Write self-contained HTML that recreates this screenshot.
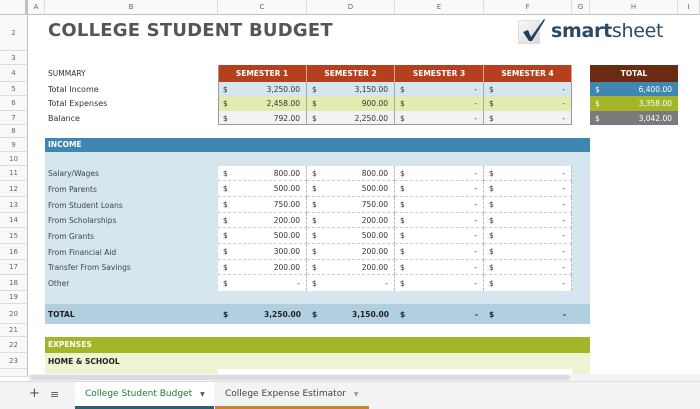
<!DOCTYPE html>
<html><head><meta charset="utf-8"><style>
*{margin:0;padding:0;box-sizing:border-box}
body{width:700px;height:409px;overflow:hidden;background:#fff;font-family:"DejaVu Sans","Liberation Sans",sans-serif;position:relative;color:#333}
.a{position:absolute}
.rh{position:absolute;left:0;width:28px;background:#f8f9fa;border-bottom:1px solid #dadce0;border-right:1px solid #c0c0c0;font-size:7px;color:#666;text-align:center;display:flex;align-items:center;justify-content:center}
.ch{position:absolute;top:0;height:15px;background:#f8f9fa;border-right:1px solid #dadce0;border-bottom:1px solid #c0c0c0;font-size:7px;color:#666;display:flex;align-items:center;justify-content:center}
.lbl{position:absolute;left:48px;font-size:8px;color:#333;display:flex;align-items:center}
.cell{position:absolute;font-size:7.5px;color:#333;display:flex;align-items:center;justify-content:space-between;padding:0 6px 0 5px}
.w{background:#fff;border-right:1px dashed #bbb;border-bottom:1px dashed #ccc}
.sh{position:absolute;top:65px;height:17px;background:#b5401e;color:#fff;font-weight:bold;font-size:7.5px;display:flex;align-items:center;justify-content:center;border-right:1px solid #e8a08a}
</style></head><body>
<!-- column headers -->
<div class="ch" style="left:0;width:28px;background:#f8f9fa;border-right:3px solid #c0c0c0"></div>
<div class="ch" style="left:28px;width:17px">A</div>
<div class="ch" style="left:45px;width:173px">B</div>
<div class="ch" style="left:218px;width:89px">C</div>
<div class="ch" style="left:307px;width:88px">D</div>
<div class="ch" style="left:395px;width:89px">E</div>
<div class="ch" style="left:484px;width:88px">F</div>
<div class="ch" style="left:572px;width:18px">G</div>
<div class="ch" style="left:590px;width:88px">H</div>
<div class="ch" style="left:678px;width:22px">I</div>
<!-- row headers -->
<div class="rh" style="top:15px;height:36px">2</div>
<div class="rh" style="top:51px;height:14px">3</div>
<div class="rh" style="top:65px;height:17px">4</div>
<div class="rh" style="top:82px;height:14px">5</div>
<div class="rh" style="top:96px;height:15px">6</div>
<div class="rh" style="top:111px;height:14px">7</div>
<div class="rh" style="top:125px;height:13px">8</div>
<div class="rh" style="top:138px;height:14px">9</div>
<div class="rh" style="top:152px;height:14px">10</div>
<div class="rh" style="top:166px;height:15px">11</div>
<div class="rh" style="top:181px;height:16px">12</div>
<div class="rh" style="top:197px;height:16px">13</div>
<div class="rh" style="top:213px;height:15px">14</div>
<div class="rh" style="top:228px;height:16px">15</div>
<div class="rh" style="top:244px;height:16px">16</div>
<div class="rh" style="top:260px;height:15px">17</div>
<div class="rh" style="top:275px;height:16px">18</div>
<div class="rh" style="top:291px;height:13px">19</div>
<div class="rh" style="top:304px;height:20px">20</div>
<div class="rh" style="top:324px;height:13px">21</div>
<div class="rh" style="top:337px;height:16px">22</div>
<div class="rh" style="top:353px;height:16px">23</div>
<div class="rh" style="top:369px;height:8px"></div>

<!-- title -->
<div class="a" style="left:48px;top:20px;font-size:18px;font-weight:bold;color:#555;letter-spacing:0.2px">COLLEGE STUDENT BUDGET</div>
<!-- logo -->
<div class="a" style="left:518px;top:20px;width:22px;height:24px;background:linear-gradient(135deg,#fafafa,#d8d8d8);border:1px solid #ddd"></div>
<svg class="a" style="left:520px;top:17px" width="28" height="28" viewBox="0 0 28 28"><path d="M3 15 L8 13 L11 20 L24 2 L25 3 L12 24 L9 24 Z" fill="#1f3f5c"/></svg>
<div class="a" style="left:551px;top:20px;font-size:19px;color:#2b4a66;font-family:'DejaVu Sans',sans-serif;letter-spacing:-0.3px"><b>smart</b>sheet</div>

<!-- summary -->
<div class="lbl" style="top:65px;height:17px;font-size:7.5px">SUMMARY</div>
<div class="lbl" style="top:82px;height:14px">Total Income</div>
<div class="lbl" style="top:96px;height:15px">Total Expenses</div>
<div class="lbl" style="top:111px;height:14px">Balance</div>
<div class="sh" style="left:218px;width:89px">SEMESTER 1</div>
<div class="sh" style="left:307px;width:88px">SEMESTER 2</div>
<div class="sh" style="left:395px;width:89px">SEMESTER 3</div>
<div class="sh" style="left:484px;width:88px">SEMESTER 4</div>
<div class="a" style="left:218px;top:82px;width:354px;height:14px;background:#d6e6ef"></div>
<div class="a" style="left:218px;top:96px;width:354px;height:15px;background:#e3ecb0"></div>
<div class="a" style="left:218px;top:111px;width:354px;height:14px;background:#f2f2f2;border-bottom:1px solid #999"></div>
<div class="cell" style="left:218px;top:82px;width:89px;height:14px;border-right:1px solid #aaa"><span>$</span><span>3,250.00</span></div>
<div class="cell" style="left:307px;top:82px;width:88px;height:14px;border-right:1px solid #aaa"><span>$</span><span>3,150.00</span></div>
<div class="cell" style="left:395px;top:82px;width:89px;height:14px;border-right:1px solid #aaa"><span>$</span><span>-</span></div>
<div class="cell" style="left:484px;top:82px;width:88px;height:14px;border-right:1px solid #999"><span>$</span><span>-</span></div>
<div class="cell" style="left:218px;top:96px;width:89px;height:15px;border-right:1px solid #aaa"><span>$</span><span>2,458.00</span></div>
<div class="cell" style="left:307px;top:96px;width:88px;height:15px;border-right:1px solid #aaa"><span>$</span><span>900.00</span></div>
<div class="cell" style="left:395px;top:96px;width:89px;height:15px;border-right:1px solid #aaa"><span>$</span><span>-</span></div>
<div class="cell" style="left:484px;top:96px;width:88px;height:15px;border-right:1px solid #999"><span>$</span><span>-</span></div>
<div class="cell" style="left:218px;top:111px;width:89px;height:14px;border-right:1px solid #aaa"><span>$</span><span>792.00</span></div>
<div class="cell" style="left:307px;top:111px;width:88px;height:14px;border-right:1px solid #aaa"><span>$</span><span>2,250.00</span></div>
<div class="cell" style="left:395px;top:111px;width:89px;height:14px;border-right:1px solid #aaa"><span>$</span><span>-</span></div>
<div class="cell" style="left:484px;top:111px;width:88px;height:14px;border-right:1px solid #999"><span>$</span><span>-</span></div>
<div class="a" style="left:218px;top:65px;width:1px;height:60px;background:#999"></div>
<!-- total -->
<div class="sh" style="left:590px;width:88px;background:#6b2a12;border:none">TOTAL</div>
<div class="cell" style="left:590px;top:82px;width:88px;height:14px;background:#3f86b0;color:#fff"><span>$</span><span>6,400.00</span></div>
<div class="cell" style="left:590px;top:96px;width:88px;height:15px;background:#a4b52a;color:#fff"><span>$</span><span>3,358.00</span></div>
<div class="cell" style="left:590px;top:111px;width:88px;height:14px;background:#7a7a7a;color:#fff"><span>$</span><span>3,042.00</span></div>

<!-- income -->
<div class="a" style="left:45px;top:138px;width:545px;height:14px;background:#3f86b0;color:#fff;font-weight:bold;font-size:7.5px;padding-left:3px;line-height:14px">INCOME</div>
<div class="a" style="left:45px;top:152px;width:545px;height:152px;background:#d6e6ef"></div>
<div class="a" style="left:218px;top:166px;width:354px;height:125px;background:#fff"></div>

<div class="lbl" style="top:166px;height:15px;font-size:7.5px;color:#444">Salary/Wages</div>
<div class="lbl" style="top:181px;height:16px;font-size:7.5px;color:#444">From Parents</div>
<div class="lbl" style="top:197px;height:16px;font-size:7.5px;color:#444">From Student Loans</div>
<div class="lbl" style="top:213px;height:15px;font-size:7.5px;color:#444">From Scholarships</div>
<div class="lbl" style="top:228px;height:16px;font-size:7.5px;color:#444">From Grants</div>
<div class="lbl" style="top:244px;height:16px;font-size:7.5px;color:#444">From Financial Aid</div>
<div class="lbl" style="top:260px;height:15px;font-size:7.5px;color:#444">Transfer From Savings</div>
<div class="lbl" style="top:275px;height:16px;font-size:7.5px;color:#444">Other</div>

<!-- rows C-F -->
<div class="cell w" style="left:218px;top:166px;width:89px;height:15px"><span>$</span><span>800.00</span></div><div class="cell w" style="left:307px;top:166px;width:88px;height:15px"><span>$</span><span>800.00</span></div><div class="cell w" style="left:395px;top:166px;width:89px;height:15px"><span>$</span><span>-</span></div><div class="cell w" style="left:484px;top:166px;width:88px;height:15px"><span>$</span><span>-</span></div>
<div class="cell w" style="left:218px;top:181px;width:89px;height:16px"><span>$</span><span>500.00</span></div><div class="cell w" style="left:307px;top:181px;width:88px;height:16px"><span>$</span><span>500.00</span></div><div class="cell w" style="left:395px;top:181px;width:89px;height:16px"><span>$</span><span>-</span></div><div class="cell w" style="left:484px;top:181px;width:88px;height:16px"><span>$</span><span>-</span></div>
<div class="cell w" style="left:218px;top:197px;width:89px;height:16px"><span>$</span><span>750.00</span></div><div class="cell w" style="left:307px;top:197px;width:88px;height:16px"><span>$</span><span>750.00</span></div><div class="cell w" style="left:395px;top:197px;width:89px;height:16px"><span>$</span><span>-</span></div><div class="cell w" style="left:484px;top:197px;width:88px;height:16px"><span>$</span><span>-</span></div>
<div class="cell w" style="left:218px;top:213px;width:89px;height:15px"><span>$</span><span>200.00</span></div><div class="cell w" style="left:307px;top:213px;width:88px;height:15px"><span>$</span><span>200.00</span></div><div class="cell w" style="left:395px;top:213px;width:89px;height:15px"><span>$</span><span>-</span></div><div class="cell w" style="left:484px;top:213px;width:88px;height:15px"><span>$</span><span>-</span></div>
<div class="cell w" style="left:218px;top:228px;width:89px;height:16px"><span>$</span><span>500.00</span></div><div class="cell w" style="left:307px;top:228px;width:88px;height:16px"><span>$</span><span>500.00</span></div><div class="cell w" style="left:395px;top:228px;width:89px;height:16px"><span>$</span><span>-</span></div><div class="cell w" style="left:484px;top:228px;width:88px;height:16px"><span>$</span><span>-</span></div>
<div class="cell w" style="left:218px;top:244px;width:89px;height:16px"><span>$</span><span>300.00</span></div><div class="cell w" style="left:307px;top:244px;width:88px;height:16px"><span>$</span><span>200.00</span></div><div class="cell w" style="left:395px;top:244px;width:89px;height:16px"><span>$</span><span>-</span></div><div class="cell w" style="left:484px;top:244px;width:88px;height:16px"><span>$</span><span>-</span></div>
<div class="cell w" style="left:218px;top:260px;width:89px;height:15px"><span>$</span><span>200.00</span></div><div class="cell w" style="left:307px;top:260px;width:88px;height:15px"><span>$</span><span>200.00</span></div><div class="cell w" style="left:395px;top:260px;width:89px;height:15px"><span>$</span><span>-</span></div><div class="cell w" style="left:484px;top:260px;width:88px;height:15px"><span>$</span><span>-</span></div>
<div class="cell w" style="left:218px;top:275px;width:89px;height:16px;border-bottom:none"><span>$</span><span>-</span></div><div class="cell w" style="left:307px;top:275px;width:88px;height:16px;border-bottom:none"><span>$</span><span>-</span></div><div class="cell w" style="left:395px;top:275px;width:89px;height:16px;border-bottom:none"><span>$</span><span>-</span></div><div class="cell w" style="left:484px;top:275px;width:88px;height:16px;border-bottom:none"><span>$</span><span>-</span></div>

<!-- total row -->
<div class="a" style="left:45px;top:304px;width:545px;height:20px;background:#b0cfe0"></div>
<div class="lbl" style="top:304px;height:20px;font-size:7.5px;font-weight:bold;color:#222">TOTAL</div>
<div class="cell" style="left:218px;top:304px;width:89px;height:20px;font-weight:bold;color:#222"><span>$</span><span>3,250.00</span></div>
<div class="cell" style="left:307px;top:304px;width:88px;height:20px;font-weight:bold;color:#222"><span>$</span><span>3,150.00</span></div>
<div class="cell" style="left:395px;top:304px;width:89px;height:20px;font-weight:bold;color:#222"><span>$</span><span>-</span></div>
<div class="cell" style="left:484px;top:304px;width:88px;height:20px;font-weight:bold;color:#222"><span>$</span><span>-</span></div>

<!-- expenses -->
<div class="a" style="left:45px;top:337px;width:545px;height:16px;background:#a4b52a;color:#fff;font-weight:bold;font-size:7.5px;padding-left:3px;line-height:16px">EXPENSES</div>
<div class="a" style="left:45px;top:353px;width:545px;height:22px;background:#eef3d2"></div>
<div class="lbl" style="top:353px;height:16px;font-size:7.5px;font-weight:bold;color:#222">HOME &amp; SCHOOL</div>
<div class="a" style="left:218px;top:369px;width:354px;height:6px;background:#fff"></div>

<!-- scrollbar -->
<div class="a" style="left:28px;top:374px;width:672px;height:8px;background:#f1f3f4"></div>
<div class="a" style="left:30px;top:375px;width:540px;height:5px;background:#dadce0;border-radius:3px"></div>
<!-- tabs -->
<div class="a" style="left:0;top:381px;width:700px;height:28px;background:#f1f3f4;border-top:1px solid #dadce0"></div>
<div class="a" style="left:29px;top:386px;font-size:13px;color:#555">+</div>
<div class="a" style="left:50px;top:388px;font-size:11px;color:#555">≡</div>
<div class="a" style="left:75px;top:382px;width:139px;height:27px;background:#fff;border-bottom:3px solid #2e5d6f;font-size:9px;color:#188038;display:flex;align-items:center;padding-left:10px">College Student Budget <span style="font-size:6px;color:#555;margin-left:8px">▼</span></div>
<div class="a" style="left:215px;top:382px;width:154px;height:27px;border-bottom:3px solid #c9842e;font-size:9px;color:#444;display:flex;align-items:center;padding-left:10px">College Expense Estimator <span style="font-size:6px;color:#999;margin-left:8px">▼</span></div>
</body></html>
